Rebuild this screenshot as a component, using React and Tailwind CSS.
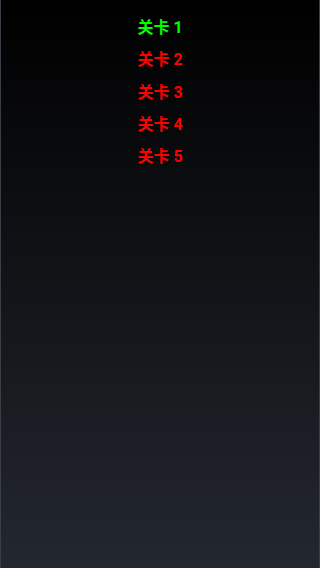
export default function App() {
  const levels = [1, 2, 3, 4, 5];
  return (
    <div className="h-[568px] w-[320px] bg-[linear-gradient(to_bottom,#000000,#23272f)] border-x border-[#3a3f47] font-['Roboto','Noto_Sans_CJK_SC',sans-serif]">
      <ul className="flex flex-col items-center pt-3">
        {levels.map((n) => (
          <li
            key={n}
            className={`h-[32.25px] leading-[32.25px] text-base font-bold ${n === 1 ? "text-[#00ff00]" : "text-[#ff0000]"}`}
          >
            关卡 {n}
          </li>
        ))}
      </ul>
    </div>
  );
}
